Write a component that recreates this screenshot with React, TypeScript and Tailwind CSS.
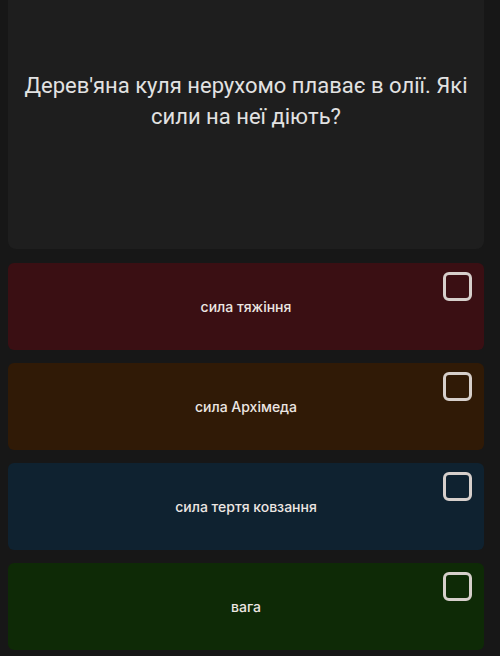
const options = [
  { label: 'сила тяжіння', bg: 'bg-[#3a0f13]' },
  { label: 'сила Архімеда', bg: 'bg-[#301a06]' },
  { label: 'сила тертя ковзання', bg: 'bg-[#0f2230]' },
  { label: 'вага', bg: 'bg-[#0e2a06]' },
];

function Checkbox() {
  return <div className="h-[29px] w-[29px] rounded-[6px] border-[3px] border-[#d6cfcb]" />;
}

export default function App() {
  return (
    <div className="h-[656px] w-[500px] overflow-hidden bg-[#171717]">
      <div className="w-[484px] pl-2">
        {/* Question */}
        <div className="flex h-[249px] items-center justify-center rounded-b-lg bg-[#1e1e1e] px-2 pb-[48px]">
          <p className="text-center font-['Roboto',sans-serif] text-[22px] leading-[31px] text-[#e2e2e2]">
            Дерев'яна куля нерухомо плаває в олії. Які сили на неї діють?
          </p>
        </div>

        {/* Answers */}
        <div className="mt-[14px] flex flex-col gap-[13px]">
          {options.map((o) => (
            <div key={o.label} className={`relative flex h-[87px] items-center justify-center rounded-md ${o.bg}`}>
              <span className="font-['Inter',sans-serif] text-[14px] font-medium text-[#ece6e2]">{o.label}</span>
              <div className="absolute right-[12px] top-[9px]">
                <Checkbox />
              </div>
            </div>
          ))}
        </div>
      </div>
    </div>
  );
}
